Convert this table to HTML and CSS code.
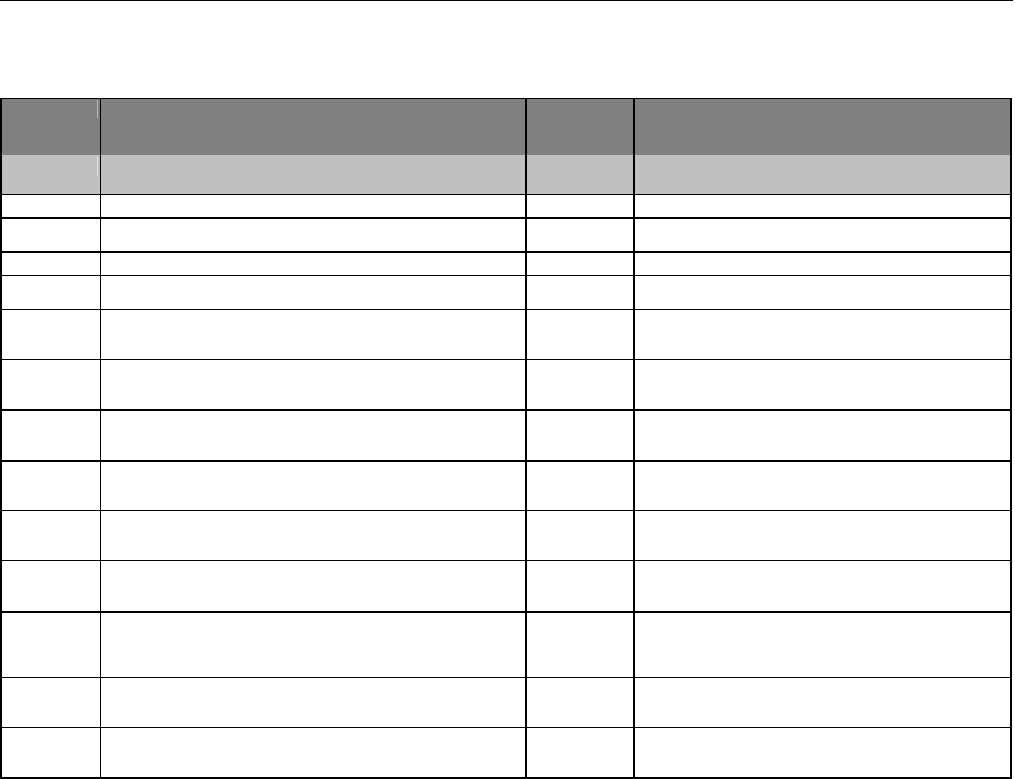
FILE: index.html
```html
<!DOCTYPE html>
<html>
<head>
<meta charset="utf-8">
<link rel="stylesheet" href="styles.css">
</head>
<body>
<div class="rule"></div>
<div class="table">
  <div class="row head-dark">
    <div class="cell c1"><span class="mark mark-dark"></span></div>
    <div class="cell c2"></div>
    <div class="cell c3"></div>
    <div class="cell c4"></div>
  </div>
  <div class="row head-light b1">
    <div class="cell c1"><span class="mark mark-light"></span></div>
    <div class="cell c2"></div>
    <div class="cell c3"></div>
    <div class="cell c4"></div>
  </div>
  <div class="row b2 h22"><div class="cell c1"></div><div class="cell c2"></div><div class="cell c3"></div><div class="cell c4"></div></div>
  <div class="row b2 h32"><div class="cell c1"></div><div class="cell c2"></div><div class="cell c3"></div><div class="cell c4"></div></div>
  <div class="row b1 h22"><div class="cell c1"></div><div class="cell c2"></div><div class="cell c3"></div><div class="cell c4"></div></div>
  <div class="row b1 h33"><div class="cell c1"></div><div class="cell c2"></div><div class="cell c3"></div><div class="cell c4"></div></div>
  <div class="row b1 h49"><div class="cell c1"></div><div class="cell c2"></div><div class="cell c3"></div><div class="cell c4"></div></div>
  <div class="row b2 h49"><div class="cell c1"></div><div class="cell c2"></div><div class="cell c3"></div><div class="cell c4"></div></div>
  <div class="row b2 h49"><div class="cell c1"></div><div class="cell c2"></div><div class="cell c3"></div><div class="cell c4"></div></div>
  <div class="row b1 h48"><div class="cell c1"></div><div class="cell c2"></div><div class="cell c3"></div><div class="cell c4"></div></div>
  <div class="row b1 h49"><div class="cell c1"></div><div class="cell c2"></div><div class="cell c3"></div><div class="cell c4"></div></div>
  <div class="row b2 h50"><div class="cell c1"></div><div class="cell c2"></div><div class="cell c3"></div><div class="cell c4"></div></div>
  <div class="row b1 h64"><div class="cell c1"></div><div class="cell c2"></div><div class="cell c3"></div><div class="cell c4"></div></div>
  <div class="row b1 h49"><div class="cell c1"></div><div class="cell c2"></div><div class="cell c3"></div><div class="cell c4"></div></div>
  <div class="row h49"><div class="cell c1"></div><div class="cell c2"></div><div class="cell c3"></div><div class="cell c4"></div></div>
</div>
</body>
</html>
```

FILE: styles.css
```css
html, body {
  margin: 0;
  padding: 0;
  background: #ffffff;
  font-family: "Liberation Sans", Arial, sans-serif;
}

.rule {
  width: 1013px;
  height: 1px;
  background: #000000;
}

.table {
  margin-top: 97px;
  width: 1008px;
  border-top: 1px solid #000;
  border-left: 2px solid #000;
  border-right: 2px solid #000;
  border-bottom: 2px solid #000;
}

.row {
  display: flex;
}

.b1 { border-bottom: 1px solid #000; }
.b2 { border-bottom: 2px solid #000; }

.head-dark { height: 56px; background: #808080; }
.head-light { height: 39px; background: #c0c0c0; }

.h22 { height: 22px; }
.h32 { height: 32px; }
.h33 { height: 33px; }
.h48 { height: 48px; }
.h49 { height: 49px; }
.h50 { height: 50px; }
.h64 { height: 64px; }

.cell {
  flex: none;
  display: flex;
  justify-content: flex-end;
}

.c1 { width: 98px; border-right: 1px solid #000; }
.c2 { width: 424px; border-right: 2px solid #000; }
.c3 { width: 106px; border-right: 2px solid #000; }
.c4 { width: 375px; }

.mark {
  display: block;
  width: 1px;
  margin-right: 2px;
}

.mark-dark {
  height: 18px;
  margin-top: 1px;
  background: #b8b8b8;
}

.mark-light {
  height: 20px;
  margin-top: 1px;
  background: #e0e0e0;
}
```
